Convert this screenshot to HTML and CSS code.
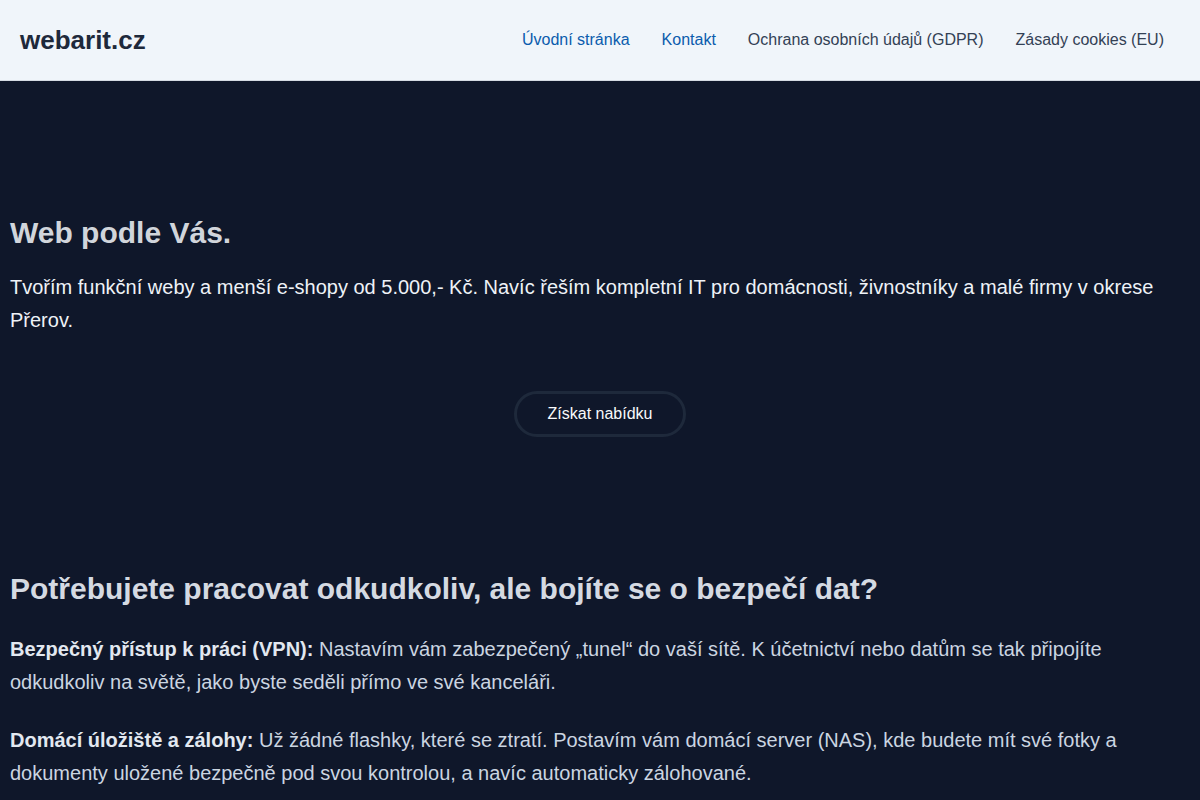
FILE: index.html
```html
<!DOCTYPE html>
<html lang="cs">
<head>
<meta charset="utf-8">
<title>webarit.cz</title>
<link rel="stylesheet" href="styles.css">
</head>
<body>
<header class="site-header">
  <a class="logo" href="#">webarit.cz</a>
  <nav class="nav">
    <a class="nav-link active" href="#">Úvodní stránka</a>
    <a class="nav-link active" href="#">Kontakt</a>
    <a class="nav-link" href="#">Ochrana osobních údajů (GDPR)</a>
    <a class="nav-link" href="#">Zásady cookies (EU)</a>
  </nav>
</header>
<main class="main">
  <section class="hero">
    <h1 class="hero-title">Web podle Vás.</h1>
    <p class="hero-text">Tvořím funkční weby a menší e-shopy od 5.000,- Kč. Navíc řeším kompletní IT pro domácnosti, živnostníky a malé firmy v okrese Přerov.</p>
    <div class="hero-actions">
      <a class="btn" href="#">Získat nabídku</a>
    </div>
  </section>
  <section class="section">
    <h2 class="section-title">Potřebujete pracovat odkudkoliv, ale bojíte se o bezpečí dat?</h2>
    <p class="section-text"><strong>Bezpečný přístup k práci (VPN):</strong> Nastavím vám zabezpečený „tunel“ do vaší sítě. K účetnictví nebo datům se tak připojíte odkudkoliv na světě, jako byste seděli přímo ve své kanceláři.</p>
    <p class="section-text"><strong>Domácí úložiště a zálohy:</strong> Už žádné flashky, které se ztratí. Postavím vám domácí server (NAS), kde budete mít své fotky a dokumenty uložené bezpečně pod svou kontrolou, a navíc automaticky zálohované.</p>
  </section>
</main>
</body>
</html>
```
FILE: styles.css
```css
* { box-sizing: border-box; }
html, body { margin: 0; padding: 0; }
body {
  background: #0f172a;
  font-family: "Liberation Sans", Arial, sans-serif;
  color: #cbd5e1;
}
.site-header {
  height: 81px;
  background: #f0f5fa;
  border-bottom: 1px solid #d5dbe3;
  display: flex;
  align-items: center;
  justify-content: space-between;
  padding: 0 20px;
}
.logo {
  font-size: 26px;
  font-weight: 700;
  color: #1e293b;
  text-decoration: none;
}
.nav { display: flex; }
.nav-link {
  font-size: 16px;
  padding: 0 16px;
  color: #334155;
  text-decoration: none;
}
.nav-link.active { color: #0b5cad; }
.main { padding: 0 10px; }
.hero { padding: 134px 0 134px; }
.hero-title {
  margin: 0;
  font-size: 30px;
  line-height: 36px;
  font-weight: 700;
  color: #d1d5db;
}
.hero-text {
  margin: 20px 0 0;
  font-size: 20px;
  line-height: 33px;
  color: #eef2f7;
}
.hero-actions {
  display: flex;
  justify-content: center;
  margin-top: 54px;
}
.btn {
  display: inline-block;
  padding: 11px 31px;
  line-height: 18px;
  font-size: 16px;
  color: #f8fafc;
  text-decoration: none;
  border: 3px solid #1e293b;
  border-radius: 999px;
}
.section-title {
  margin: 0 0 26px;
  font-size: 30px;
  line-height: 36px;
  font-weight: 700;
  color: #d5dae2;
}
.section-text {
  margin: 0 0 25px;
  font-size: 20px;
  line-height: 33px;
  color: #cbd5e1;
}
.section-text strong { color: #e2e8f0; }
```
